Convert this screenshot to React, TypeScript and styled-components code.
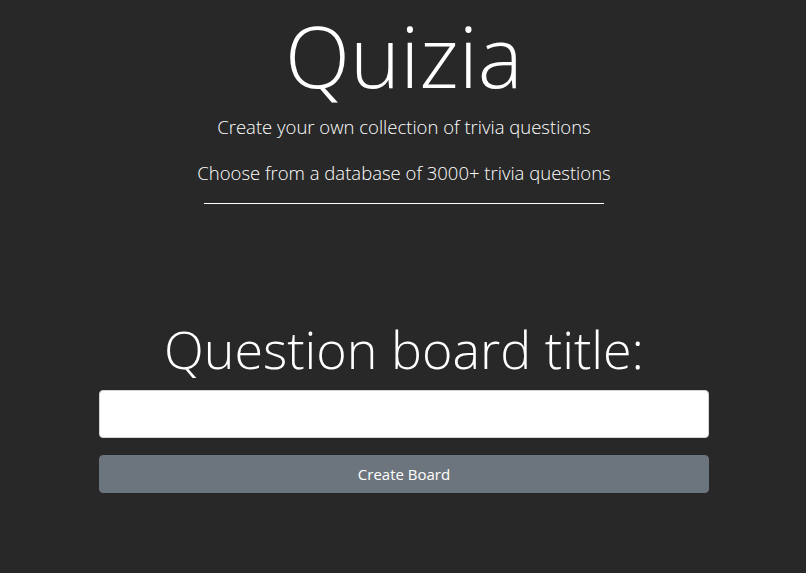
import styled, { createGlobalStyle } from "styled-components";

const GlobalStyle = createGlobalStyle`
  body {
    margin: 0;
    background-color: #282828;
    color: #fff;
    font-family: "Open Sans", "Liberation Sans", sans-serif;
  }
`;

export default function App() {
  return (
    <>
      <GlobalStyle />
      <Page>
        <Header>
          <Title>Quizia</Title>
          <Lead>Create your own collection of trivia questions</Lead>
          <Lead>Choose from a database of 3000+ trivia questions</Lead>
          <Divider />
        </Header>
        <Form>
          <FormTitle>Question board title:</FormTitle>
          <TitleInput type="text" />
          <CreateBtn>Create Board</CreateBtn>
        </Form>
      </Page>
    </>
  );
}

const Page = styled.div`
  box-sizing: border-box;
  width: 806px;
  min-height: 573px;
  padding-left: 2px;
  display: flex;
  flex-direction: column;
  align-items: center;
`;

const Header = styled.header`
  display: flex;
  flex-direction: column;
  align-items: center;
`;

const Title = styled.h1`
  margin: 0 0 2px;
  font-size: 85px;
  font-weight: 300;
  line-height: 110px;
`;

const Lead = styled.p`
  margin: 0 0 16px;
  font-size: 18.5px;
  font-weight: 300;
  line-height: 30px;

  &:last-of-type {
    margin-bottom: 15px;
  }
`;

const Divider = styled.hr`
  width: 400px;
  margin: 0;
  border: none;
  border-top: 1px solid #fff;
`;

const Form = styled.div`
  width: 610px;
  margin-top: 111px;
  display: flex;
  flex-direction: column;
  align-items: stretch;
`;

const FormTitle = styled.h2`
  margin: 0 0 8px;
  text-align: center;
  font-size: 52px;
  font-weight: 300;
  line-height: 67px;
`;

const TitleInput = styled.input`
  box-sizing: border-box;
  height: 48px;
  padding: 8px 16px;
  border: 1px solid #ced4da;
  border-radius: 4px;
  background: #fff;
  font-size: 20px;
  outline: none;
`;

const CreateBtn = styled.button`
  margin-top: 17px;
  height: 38px;
  border: 1px solid #6c757d;
  border-radius: 4px;
  background-color: #6c757d;
  color: #fff;
  font-family: "Open Sans", "Liberation Sans", sans-serif;
  font-size: 15px;
  cursor: pointer;
`;
